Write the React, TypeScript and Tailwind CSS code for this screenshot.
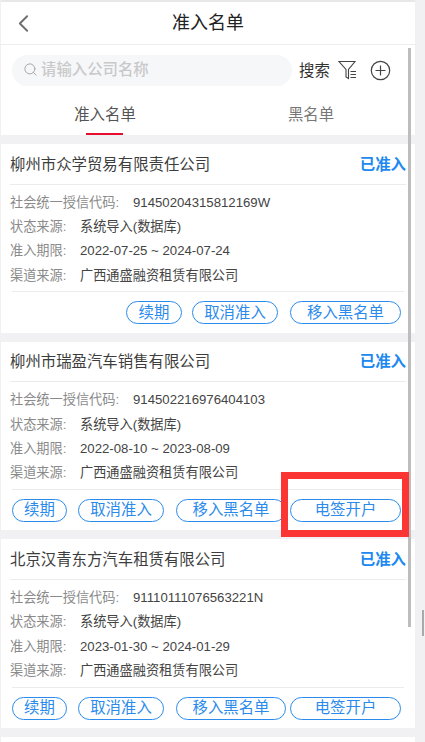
import React from "react";
import { ChevronLeft, Search } from "lucide-react";

interface Company {
  name: string;
  code: string;
  period: string;
  canSign: boolean;
}

const companies: Company[] = [
  {
    name: "柳州市众学贸易有限责任公司",
    code: "91450204315812169W",
    period: "2022-07-25 ~ 2024-07-24",
    canSign: false,
  },
  {
    name: "柳州市瑞盈汽车销售有限公司",
    code: "914502216976404103",
    period: "2022-08-10 ~ 2023-08-09",
    canSign: true,
  },
  {
    name: "北京汉青东方汽车租赁有限公司",
    code: "91110111076563221N",
    period: "2023-01-30 ~ 2024-01-29",
    canSign: true,
  },
];

const Pill: React.FC<{ label: string; className: string }> = ({ label, className }) => (
  <button
    className={`h-[23px] rounded-full border border-[#2b8bec] text-[15.4px] leading-[20px] text-[#2b8bec] ${className}`}
  >
    {label}
  </button>
);

const Row: React.FC<{ label: string; value: string; labelWidth: string }> = ({ label, value, labelWidth }) => (
  <div className="flex h-[24.3px] items-center text-[13.2px]">
    <span className={`shrink-0 text-[#8a8a8a] ${labelWidth}`}>{label}</span>
    <span className="text-[#444444]">{value}</span>
  </div>
);

const CompanyCard: React.FC<{ item: Company }> = ({ item }) => (
  <div className="h-[188.7px] bg-white pl-[9px] pr-[9px]">
    <div className="flex h-[40.5px] items-center justify-between border-b border-[#ececec] pt-px">
      <span className="text-[15.4px] text-[#3d3d3d]">{item.name}</span>
      <span className="text-[15.4px] font-bold text-[#2089f0]">已准入</span>
    </div>
    <div className="mt-[6px]">
      <Row label="社会统一授信代码:" value={item.code} labelWidth="w-[123px]" />
      <Row label="状态来源:" value="系统导入(数据库)" labelWidth="w-[70px]" />
      <Row label="准入期限:" value={item.period} labelWidth="w-[70px]" />
      <Row label="渠道来源:" value="广西通盛融资租赁有限公司" labelWidth="w-[70px]" />
    </div>
    <div className="ml-[2px] mr-[2px] mt-[3.5px] flex justify-end border-t border-[#ececec] pr-[3px] pt-[9px]">
      {item.canSign ? (
        <>
          <Pill label="续期" className="w-[55px]" />
          <Pill label="取消准入" className="ml-[11px] w-[86px]" />
          <Pill label="移入黑名单" className="ml-[12px] w-[110px]" />
          <Pill label="电签开户" className="ml-[4px] w-[111px]" />
        </>
      ) : (
        <>
          <Pill label="续期" className="w-[56px]" />
          <Pill label="取消准入" className="ml-[10px] w-[86px]" />
          <Pill label="移入黑名单" className="ml-[12px] w-[111px]" />
        </>
      )}
    </div>
  </div>
);

export default function App() {
  return (
    <div className="relative flex h-[742px] w-[425px] overflow-hidden bg-[#f1f1f3] pl-px font-['Liberation_Sans','Noto_Sans_CJK_SC',sans-serif]">
      <div className="w-[414px] shrink-0 border-t-2 border-[#e8e8e8] bg-white">
        {/* header */}
        <div className="relative flex h-[43px] items-center justify-center border-b border-[#eeeeee]">
          <ChevronLeft className="absolute left-[8px] top-[7px] text-[#6f6f6f]" size={29} strokeWidth={1.6} />
          <span className="text-[18px] text-[#222222]">准入名单</span>
        </div>

        {/* search */}
        <div className="flex h-[41px] items-end pl-[11px]">
          <div className="flex h-[31px] w-[280px] items-center rounded-full bg-[#f6f7f9] pl-[11px]">
            <Search size={15} strokeWidth={1.6} className="-mt-[2px] text-[#a8a8a8]" />
            <span className="-mt-[2px] ml-[3px] text-[15.4px] font-medium text-[#c9c9c9]">请输入公司名称</span>
          </div>
          <div className="flex h-[31px] items-center">
            <span className="ml-[7px] text-[15.4px] text-[#333333]">搜索</span>
            <svg width="20" height="20" viewBox="0 0 20 20" fill="none" stroke="#444444" strokeWidth="1.1" className="-mt-[1px] ml-[8px]">
              <path d="M1 1.5 H17 L10.5 9.5 V18.5 L8 17 V9.5 Z" />
              <path d="M12.5 11.5 H18 M12.5 14.5 H18 M12.5 17.5 H18" />
            </svg>
            <svg width="21" height="21" viewBox="0 0 21 21" fill="none" stroke="#444444" strokeWidth="1.2" className="ml-[12px]">
              <circle cx="10.5" cy="10.5" r="9.2" />
              <path d="M10.5 5.5 V15.5 M5.5 10.5 H15.5" />
            </svg>
          </div>
        </div>

        {/* tabs */}
        <div className="flex h-[49px] text-[15.4px]">
          <div className="relative flex w-[208px] items-center justify-center pt-[9px] text-[#555555]">
            准入名单
            <div className="absolute bottom-0 left-[85px] h-[2px] w-[37px] bg-[#e60d2e]" />
          </div>
          <div className="flex flex-1 items-center justify-center pr-[2px] pt-[9px] text-[#777777]">黑名单</div>
        </div>

        {/* list */}
        <div className="flex flex-col gap-[9px] bg-[#f1f1f3] py-[9px]">
          {companies.map((item) => (
            <CompanyCard key={item.code} item={item} />
          ))}
        </div>
      </div>

      {/* inner scrollbar */}
      <div className="absolute left-[408px] top-[48px] h-[579px] w-[3px] bg-[#bdbdbd]" />
      {/* outer scrollbar */}
      <div className="absolute left-[422px] top-[610px] h-[26px] w-[2px] bg-[#a9a9a9]" />
      {/* annotation */}
      <div className="absolute left-[281px] top-[472px] h-[65px] w-[128px] border-[7px] border-[#fb3434]" />
    </div>
  );
}
